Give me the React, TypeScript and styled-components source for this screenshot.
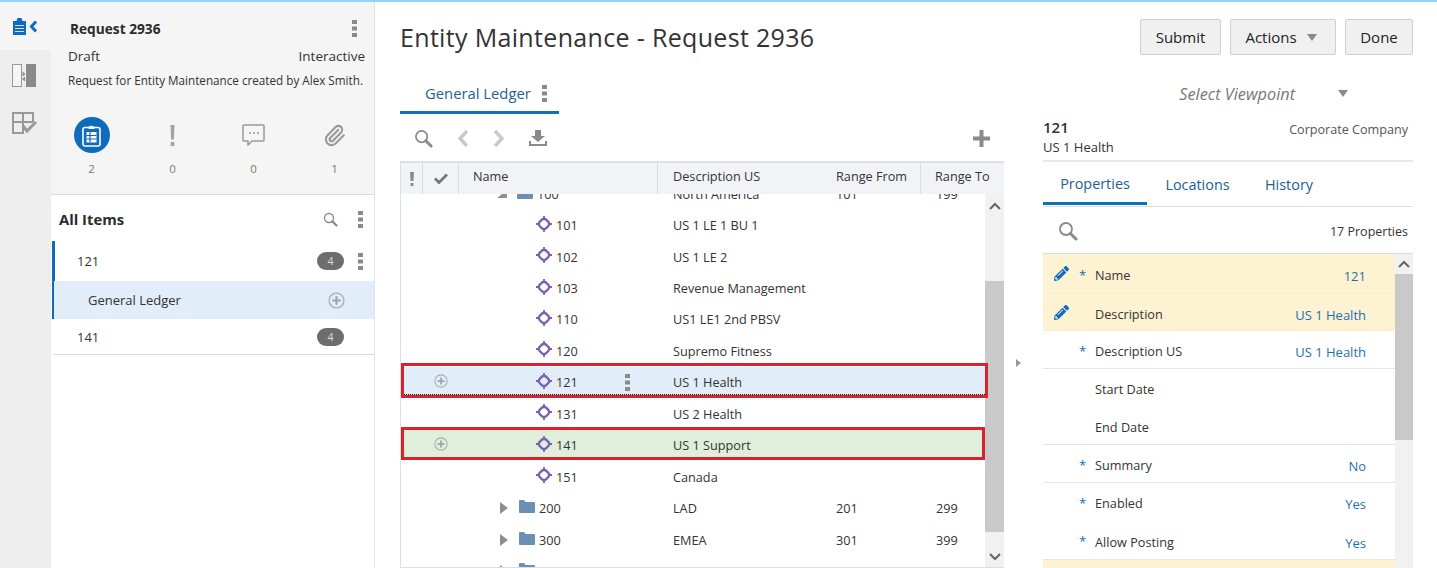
import React from "react";
import styled, { createGlobalStyle } from "styled-components";
import { FaPencilAlt } from "react-icons/fa";
import { Paperclip } from "lucide-react";

const Global = createGlobalStyle`
  html, body { margin: 0; height: 568px; overflow: hidden; background: #fff; }
  body { font-family: "Open Sans", "Noto Sans", sans-serif; font-size: 13px; color: #333; }
  * { box-sizing: border-box; }
`;

const Page = styled.div`display:flex;flex-direction:column;height:568px;width:1437px;overflow:hidden;`;
const TopBar = styled.div`height:2px;background:#8fd4fb;flex:none;`;
const Body = styled.div`display:flex;flex:1;min-height:0;`;

const Rail = styled.nav`width:51px;flex:none;background:#eeeeee;display:flex;flex-direction:column;align-items:center;`;
const RailTop = styled.div`width:100%;height:48px;background:#f5f5f5;display:flex;align-items:center;justify-content:center;gap:3px;margin-bottom:2px;`;
const RailItem = styled.div`height:47px;display:flex;align-items:center;justify-content:center;margin-left:-3px;`;

const Side = styled.aside`width:324px;flex:none;border-right:1px solid #e3e3e3;display:flex;flex-direction:column;`;
const SideHead = styled.header`height:193px;background:#f5f5f5;border-bottom:1px solid #dcdcdc;padding:0 9px 0 17px;display:flex;flex-direction:column;`;
const RequestRow = styled.div`display:flex;justify-content:space-between;align-items:center;height:20px;margin-top:16px;padding:0 8px 0 2px;`;
const RequestTitle = styled.div`font-size:13.7px;font-weight:700;color:#2b2b2b;`;
const StatusRow = styled.div`display:flex;justify-content:space-between;margin-top:8px;font-size:13.5px;line-height:20px;`;
const ReqDesc = styled.div`font-size:11.7px;line-height:16px;margin-top:6px;white-space:nowrap;`;
const Stats = styled.div`display:grid;grid-template-columns:repeat(4,81px);margin-top:29px;margin-left:-17px;padding-left:0;`;
const Stat = styled.div`display:flex;flex-direction:column;align-items:center;height:60px;`;
const StatIcon = styled.div`height:36px;display:flex;align-items:center;justify-content:center;`;
const StatNum = styled.div`font-size:11.5px;color:#777;margin-top:9px;line-height:14px;`;
const Circle = styled.div`width:36px;height:36px;border-radius:50%;background:#0f6cbd;display:flex;align-items:center;justify-content:center;`;

const ItemsHead = styled.div`display:flex;align-items:center;height:46px;padding:2px 11px 0 8px;margin-left:0;`;
const ItemsTitle = styled.div`font-size:14.8px;font-weight:700;color:#2b2b2b;flex:1;`;
const ItemRow = styled.div<{ $h: number; $bar?: boolean; $last?: boolean }>`
  height:${p => p.$h}px;display:flex;align-items:center;margin-left:1px;padding-left:22px;padding-right:11px;font-size:13px;
  border-left:3px solid ${p => (p.$bar ? "#0f6cbd" : "transparent")};
  ${p => p.$last && "border-bottom:1px solid #dcdcdc;"}
`;
const ItemName = styled.div`flex:1;`;
const Badge = styled.div`width:27px;height:18px;border-radius:9px;background:#6d6d6d;color:#ddd;font-size:10.5px;display:flex;align-items:center;justify-content:center;`;
const BadgeGutter = styled.div`width:19px;display:flex;justify-content:flex-end;`;
const LedgerRow = styled.div`height:38px;display:flex;align-items:center;margin-left:1px;padding:0 29px 0 34px;background:#e1edf8;border-left:2px solid #0f6cbd;font-size:13px;`;

const Main = styled.main`flex:1;min-width:0;padding:0 24px 0 25px;display:flex;flex-direction:column;`;
const TitleRow = styled.div`display:flex;justify-content:space-between;height:61px;padding-top:17px;flex:none;`;
const Title = styled.h1`margin:-1px 0 0;font-size:25px;font-weight:400;line-height:38px;color:#333;letter-spacing:.33px;`;
const Buttons = styled.div`display:flex;gap:9px;`;
const Btn = styled.button<{ $w: number; $shift?: number }>`height:36px;width:${p => p.$w}px;padding:0 ${p => p.$shift ?? 0}px 0 0;border:1px solid #cfcfcf;border-radius:2px;background:#f0f0f0;font:15px "Open Sans",sans-serif;color:#222;display:flex;align-items:center;justify-content:center;gap:10px;`;
const Caret = styled.span`width:0;height:0;border-left:5.5px solid transparent;border-right:5.5px solid transparent;border-top:7px solid #8a8a8a;display:inline-block;`;

const Columns = styled.div`display:flex;flex:1;min-height:0;`;
const TreePane = styled.section`width:604px;flex:none;display:flex;flex-direction:column;`;
const TabStrip = styled.div`height:52px;flex:none;`;
const ActiveTab = styled.div`width:159px;height:33px;margin-top:18px;border-bottom:3px solid #0f72b5;display:flex;align-items:center;gap:11px;padding:0 0 6px 25px;color:#1f5f8f;font-size:14.8px;`;
const Toolbar = styled.div`height:46px;flex:none;display:flex;align-items:center;padding:0 14px 0 14px;gap:24px;`;
const Spacer = styled.div`flex:1;`;
const Table = styled.div`flex:1;min-height:0;border:1px solid #dbe0e4;border-top-width:2px;border-right:0;display:flex;flex-direction:column;position:relative;`;
const cols = "22px 36px 199px 163px 100px 1fr";
const HeadRow = styled.div`display:grid;grid-template-columns:${cols};height:31px;background:#f1f3f6;flex:none;position:relative;z-index:1;`;
const HeadCell = styled.div<{ $line?: boolean; $center?: boolean; $pad?: number }>`
  display:flex;align-items:center;padding:0 0 6px ${p => p.$pad ?? 14}px;font-size:12.7px;white-space:nowrap;
  ${p => p.$center && "justify-content:center;padding-left:0;padding-bottom:0;"}
  ${p => p.$line && "border-right:1px solid #d9dde1;"}
`;
const TableBody = styled.div`flex:1;min-height:0;display:flex;overflow:hidden;`;
const Rows = styled.div`flex:1;margin-top:-16px;min-width:0;`;
const Row = styled.div<{ $bg?: string }>`
  display:grid;grid-template-columns:${cols};height:31.45px;position:relative;align-items:center;font-size:12.7px;
  ${p => p.$bg && `background:linear-gradient(${p.$bg},${p.$bg}) center/100% 30px no-repeat;`}
`;
const PlusCell = styled.div`grid-column:2;display:flex;justify-content:center;margin-top:-3px;`;
const NameCell = styled.div<{ $indent: number }>`grid-column:3;display:flex;align-items:center;padding-left:${p => p.$indent}px;gap:4px;white-space:nowrap;`;
const Cell = styled.div`padding-left:15px;white-space:nowrap;`;
const Mark = styled.div<{ $top: number; $height: number; $right: number; $dotted?: boolean }>`
  position:absolute;left:0;right:${p => p.$right}px;top:${p => p.$top}px;height:${p => p.$height}px;border:3px solid #d8232f;pointer-events:none;z-index:2;
  ${p => p.$dotted && `&::after{content:"";position:absolute;left:0;right:0;bottom:0;border-bottom:1px dotted #111;}`}
`;
const Scroll = styled.div<{ $w?: number }>`width:${p => p.$w ?? 19}px;flex:none;background:#f1f1f1;display:flex;flex-direction:column;align-items:center;`;
const ScrollEnd = styled.div<{ $h: number }>`height:${p => p.$h}px;flex:none;display:flex;align-items:center;justify-content:center;width:100%;`;
const Thumb = styled.div<{ $h: number }>`height:${p => p.$h}px;flex:none;width:100%;background:#c9c9c9;`;

const Splitter = styled.div`width:39px;flex:none;display:flex;justify-content:center;padding:296px 11px 0 0;`;
const SplitArrow = styled.span`width:0;height:0;border-top:4px solid transparent;border-bottom:4px solid transparent;border-left:5px solid #999;`;

const Details = styled.section`flex:1;min-width:0;display:flex;flex-direction:column;`;
const Viewpoint = styled.div`height:52px;display:flex;align-items:center;justify-content:flex-end;gap:43px;padding:9px 65px 0 0;font-style:italic;font-size:16.3px;color:#777;flex:none;`;
const NodeHead = styled.div`height:47px;flex:none;border-bottom:2px solid #eaeaea;display:flex;justify-content:space-between;padding:0 5px 0 0;`;
const NodeName = styled.div`font-size:15px;font-weight:600;line-height:20px;margin-top:2px;color:#333;`;
const NodeSub = styled.div`font-size:13px;line-height:16px;margin-top:2px;`;
const NodeType = styled.div`font-size:12.6px;margin-top:6px;color:#555;`;
const DTabs = styled.div`height:45px;flex:none;display:flex;border-bottom:1px solid #dcdfe2;`;
const DTab = styled.div<{ $active?: boolean; $w: number }>`
  width:${p => p.$w}px;height:43px;display:flex;align-items:center;justify-content:center;font-size:14.4px;color:#22618f;padding-top:2px;
  ${p => p.$active && "border-bottom:3px solid #0f72b5;"}
`;
const PropTools = styled.div`height:46px;flex:none;display:flex;align-items:center;justify-content:space-between;padding:2px 5px 0 15px;font-size:12.5px;`;
const PropArea = styled.div`flex:1;min-height:0;display:flex;border-top:1px solid #dcdcdc;overflow:hidden;`;
const PropList = styled.div`flex:1;min-width:0;`;
const PropRow = styled.div<{ $h: number; $yellow?: boolean; $line?: boolean }>`
  height:${p => p.$h}px;display:grid;grid-template-columns:36px 16px 1fr auto;align-items:center;padding:3px 29px 0 0;font-size:12.7px;
  background:${p => (p.$yellow ? "#fdf3d2" : "#fff")};
  border-bottom:1px solid ${p => (p.$yellow ? "#f8eecb" : p.$line ? "#e6e6e6" : "transparent")};
`;
const EditCell = styled.div`display:flex;justify-content:center;padding-left:1px;margin-top:-3px;`;
const Star = styled.span`color:#0f6cbd;font-size:13px;line-height:1;`;
const PropVal = styled.span`color:#1d6fb0;font-size:13px;margin-top:2px;`;
const Dummy = styled.span``;

const Kebab = ({ c = "#8a8a8a" }: { c?: string }) => (
  <svg width="5" height="17" viewBox="0 0 5 17"><rect x="0" y="0" width="5" height="4" fill={c} /><rect x="0" y="6.5" width="5" height="4" fill={c} /><rect x="0" y="13" width="5" height="4" fill={c} /></svg>
);
const Search = ({ s = 20, c = "#8a8a8a" }: { s?: number; c?: string }) => (
  <svg width={s} height={s} viewBox="0 0 20 20" fill="none"><circle cx="8" cy="8" r="6" stroke={c} strokeWidth="1.8" /><path d="M12.5 12.5 18 18" stroke={c} strokeWidth="3" strokeLinecap="round" /></svg>
);
const PlusCircle = ({ s = 15 }: { s?: number }) => (
  <svg width={s} height={s} viewBox="0 0 16 16" fill="none"><circle cx="8" cy="8" r="7" stroke="#a9aeb0" strokeWidth="1.2" /><path d="M8 4v8M4 8h8" stroke="#a0a5a7" strokeWidth="2" /></svg>
);
const Node = () => (
  <svg width="16" height="16" viewBox="0 0 16 16" fill="none" style={{ flex: "none", marginTop: -3, marginLeft: 1 }}>
    <path d="M8 2.8 Q10 3 11.2 4.8 Q13 6 13.2 8 Q13 10 11.2 11.2 Q10 13 8 13.2 Q6 13 4.8 11.2 Q3 10 2.8 8 Q3 6 4.8 4.8 Q6 3 8 2.8Z" stroke="#7a5fb5" strokeWidth="2.4" fill="none" />
    <path d="M8 0v3M8 13v3M0 8h3M13 8h3" stroke="#7a5fb5" strokeWidth="1.8" />
  </svg>
);
const Folder = () => (
  <svg width="16" height="13" viewBox="0 0 16 13" style={{ flex: "none", marginTop: -3 }}><path d="M0 1a1 1 0 0 1 1-1h4l1.5 2H15a1 1 0 0 1 1 1v9a1 1 0 0 1-1 1H1a1 1 0 0 1-1-1Z" fill="#6b8fb5" /></svg>
);
const Tri = () => (
  <svg width="8" height="12" viewBox="0 0 8 12" style={{ flex: "none", marginRight: 7 }}><path d="M0 0 8 6 0 12Z" fill="#8f8f8f" /></svg>
);
const TriDown = () => (
  <svg width="10" height="8" viewBox="0 0 10 8" style={{ flex: "none", marginRight: 6 }}><path d="M10 0V8H0Z" fill="#8f8f8f" /></svg>
);
const Chev = ({ d, c = "#666" }: { d: "up" | "down"; c?: string }) => (
  <svg width="12" height="8" viewBox="0 0 12 8" fill="none"><path d={d === "up" ? "M1 7 6 2l5 5" : "M1 1l5 5 5-5"} stroke={c} strokeWidth="2" /></svg>
);
const ClipboardBlue = () => (
  <svg width="13" height="17" viewBox="0 0 13 17"><path d="M0 3h3.5l1-3h4l1 3H13v14H0Z" fill="#0f6cbd" /><path d="M2 7.5h9M2 10.5h9M2 13.5h9" stroke="#cfe3f5" strokeWidth="1" /></svg>
);
const ClipboardWhite = () => (
  <svg width="19" height="23" viewBox="0 0 19 23" fill="none">
    <rect x="1" y="3.5" width="17" height="18.5" rx="2" stroke="#fff" strokeWidth="1.6" />
    <path d="M6.5 5V2.5h2a1 1 0 0 1 2 0h2V5Z" fill="#fff" />
    <rect x="4.5" y="8" width="10" height="10.5" fill="#fff" />
    <path d="M4.5 11.5h10M4.5 15h10M8 8v10.5" stroke="#0f6cbd" strokeWidth="1.2" />
  </svg>
);

const leaves: [string, string][] = [["101", "US 1 LE 1 BU 1"], ["102", "US 1 LE 2"], ["103", "Revenue Management"], ["110", "US1 LE1 2nd PBSV"], ["120", "Supremo Fitness"]];

export default function App() {
  return (
    <Page>
      <Global />
      <TopBar />
      <Body>
        <Rail>
          <RailTop>
            <ClipboardBlue />
            <svg width="9" height="13" viewBox="0 0 9 13" fill="none"><path d="M7 1.5 2.5 6.5 7 11.5" stroke="#0f6cbd" strokeWidth="3" /></svg>
          </RailTop>
          <RailItem>
            <svg width="24" height="23" viewBox="0 0 24 23" fill="none"><rect x=".5" y=".5" width="9" height="22" stroke="#999" fill="#f5f5f5" /><rect x="14" y="0" width="10" height="23" fill="#8a8a8a" /><path d="M10.5 7.5l3 2.5-3 2.5ZM13 12.5l-3 2.5 3 2.5Z" fill="#8a8a8a" /></svg>
          </RailItem>
          <RailItem>
            <svg width="25" height="22" viewBox="0 0 25 22" fill="none"><path d="M12 21H1V1h20v9M1 10h20M11 1v20" stroke="#999" strokeWidth="2" /><path d="M11 14l4 5 9-9" stroke="#999" strokeWidth="3" fill="none" /></svg>
          </RailItem>
        </Rail>
        <Side>
          <SideHead>
            <RequestRow>
              <RequestTitle>Request 2936</RequestTitle>
              <Kebab />
            </RequestRow>
            <StatusRow><span>Draft</span><span>Interactive</span></StatusRow>
            <ReqDesc>Request for Entity Maintenance created by Alex Smith.</ReqDesc>
            <Stats>
              <Stat><StatIcon><Circle><ClipboardWhite /></Circle></StatIcon><StatNum>2</StatNum></Stat>
              <Stat><StatIcon><svg width="5" height="21" viewBox="0 0 5 21"><path d="M.5 0h4l-.6 14.5H1.1Z" fill="#a3a3a3" /><rect x=".7" y="17" width="3.6" height="4" fill="#a3a3a3" /></svg></StatIcon><StatNum>0</StatNum></Stat>
              <Stat><StatIcon><svg width="23" height="22" viewBox="0 0 23 22" fill="none"><path d="M2 1h19a1 1 0 0 1 1 1v14a1 1 0 0 1-1 1H10l-4 4v-4H2a1 1 0 0 1-1-1V2a1 1 0 0 1 1-1Z" stroke="#999" strokeWidth="1.5" /><path d="M7 9h2M11 9h2M15 9h2" stroke="#999" strokeWidth="1.4" /></svg></StatIcon><StatNum>0</StatNum></Stat>
              <Stat><StatIcon><Paperclip size={23} color="#999" strokeWidth={2.2} /></StatIcon><StatNum>1</StatNum></Stat>
            </Stats>
          </SideHead>
          <ItemsHead>
            <ItemsTitle>All Items</ItemsTitle>
            <Search s={15} />
            <Dummy style={{ width: 20 }} />
            <Kebab />
          </ItemsHead>
          <ItemRow $h={40} $bar><ItemName>121</ItemName><Badge>4</Badge><BadgeGutter><Kebab /></BadgeGutter></ItemRow>
          <LedgerRow><ItemName>General Ledger</ItemName><PlusCircle s={17} /></LedgerRow>
          <ItemRow $h={36} $last><ItemName>141</ItemName><Badge>4</Badge><BadgeGutter /></ItemRow>
        </Side>
        <Main>
          <TitleRow>
            <Title>Entity Maintenance - Request 2936</Title>
            <Buttons>
              <Btn $w={81}>Submit</Btn>
              <Btn $w={106} $shift={4}>Actions<Caret /></Btn>
              <Btn $w={68}>Done</Btn>
            </Buttons>
          </TitleRow>
          <Columns>
            <TreePane>
              <TabStrip><ActiveTab>General Ledger<Kebab /></ActiveTab></TabStrip>
              <Toolbar>
                <Search s={19} />
                <svg width="12" height="19" viewBox="0 0 12 19" fill="none"><path d="M10 2 3 9.5l7 7.5" stroke="#c9c9c9" strokeWidth="3.4" /></svg>
                <svg width="12" height="19" viewBox="0 0 12 19" fill="none"><path d="M2 2l7 7.5L2 17" stroke="#c9c9c9" strokeWidth="3.4" /></svg>
                <svg width="18" height="16" viewBox="0 0 18 16"><path d="M6 0h6v6h4l-7 6-7-6h4Z" fill="#8a8a8a" /><path d="M0 11v5h18v-5h-2v3H2v-3Z" fill="#8a8a8a" /></svg>
                <Spacer />
                <svg width="17" height="17" viewBox="0 0 17 17"><path d="M6.5 0h4v6.5H17v4h-6.5V17h-4v-6.5H0v-4h6.5Z" fill="#8a8a8a" /></svg>
              </Toolbar>
              <Table>
                <HeadRow>
                  <HeadCell $line $center><svg width="4" height="14" viewBox="0 0 4 14"><path d="M0 0h4l-.6 9H.6Z M.6 11h2.8v3H.6Z" fill="#8a8a8a" /></svg></HeadCell>
                  <HeadCell $line $center><svg width="14" height="11" viewBox="0 0 14 11" fill="none"><path d="M1 5.5 5 9.5 13 1.5" stroke="#777" strokeWidth="2.8" /></svg></HeadCell>
                  <HeadCell $line>Name</HeadCell>
                  <HeadCell $pad={15}>Description US</HeadCell>
                  <HeadCell $line $pad={15}>Range From</HeadCell>
                  <HeadCell>Range To</HeadCell>
                </HeadRow>
                <TableBody>
                  <Rows>
                    <Row><NameCell $indent={38}><TriDown /><Folder /><Dummy>100</Dummy></NameCell><Cell>North America</Cell><Cell>101</Cell><Cell>199</Cell></Row>
                    {leaves.map(([n, d]) => (
                      <Row key={n}><NameCell $indent={76}><Node /><Dummy>{n}</Dummy></NameCell><Cell>{d}</Cell></Row>
                    ))}
                    <Row $bg="#e1edf8">
                      <PlusCell><PlusCircle s={14} /></PlusCell>
                      <NameCell $indent={76}><Node /><Dummy>121</Dummy><Dummy style={{ width: 39 }} /><Kebab /></NameCell>
                      <Cell>US 1 Health</Cell>
                    </Row>
                    <Row><NameCell $indent={76}><Node /><Dummy>131</Dummy></NameCell><Cell>US 2 Health</Cell></Row>
                    <Row $bg="#e0efdb">
                      <PlusCell><PlusCircle s={14} /></PlusCell>
                      <NameCell $indent={76}><Node /><Dummy>141</Dummy></NameCell>
                      <Cell>US 1 Support</Cell>
                    </Row>
                    <Row><NameCell $indent={76}><Node /><Dummy>151</Dummy></NameCell><Cell>Canada</Cell></Row>
                    <Row><NameCell $indent={41}><Tri /><Folder /><Dummy>200</Dummy></NameCell><Cell>LAD</Cell><Cell>201</Cell><Cell>299</Cell></Row>
                    <Row><NameCell $indent={41}><Tri /><Folder /><Dummy>300</Dummy></NameCell><Cell>EMEA</Cell><Cell>301</Cell><Cell>399</Cell></Row>
                    <Row><NameCell $indent={41}><Tri /><Folder /><Dummy>400</Dummy></NameCell><Cell>APAC</Cell></Row>
                  </Rows>
                  <Scroll>
                    <ScrollEnd $h={23}><Chev d="up" /></ScrollEnd>
                    <ScrollEnd $h={64} />
                    <Thumb $h={251} />
                    <ScrollEnd $h={14} />
                    <ScrollEnd $h={22}><Chev d="down" /></ScrollEnd>
                  </Scroll>
                </TableBody>
                <Mark $top={200} $height={35} $right={16} $dotted />
                <Mark $top={264} $height={33} $right={19} />
              </Table>
            </TreePane>
            <Splitter><SplitArrow /></Splitter>
            <Details>
              <Viewpoint><span>Select Viewpoint</span><Caret /></Viewpoint>
              <NodeHead>
                <div><NodeName>121</NodeName><NodeSub>US 1 Health</NodeSub></div>
                <NodeType>Corporate Company</NodeType>
              </NodeHead>
              <DTabs>
                <DTab $active $w={104}>Properties</DTab>
                <DTab $w={101}>Locations</DTab>
                <DTab $w={82}>History</DTab>
              </DTabs>
              <PropTools><Search s={20} /><span>17 Properties</span></PropTools>
              <PropArea>
                <PropList>
                  <PropRow $h={40} $yellow><EditCell><FaPencilAlt size={15} color="#0f6cbd" /></EditCell><Star>*</Star><span>Name</span><PropVal>121</PropVal></PropRow>
                  <PropRow $h={37} $yellow><EditCell><FaPencilAlt size={15} color="#0f6cbd" /></EditCell><span /><span>Description</span><PropVal>US 1 Health</PropVal></PropRow>
                  <PropRow $h={38} $line><span /><Star>*</Star><span>Description US</span><PropVal>US 1 Health</PropVal></PropRow>
                  <PropRow $h={38}><span /><span /><span>Start Date</span><span /></PropRow>
                  <PropRow $h={38} $line><span /><span /><span>End Date</span><span /></PropRow>
                  <PropRow $h={38} $line><span /><Star>*</Star><span>Summary</span><PropVal>No</PropVal></PropRow>
                  <PropRow $h={38}><span /><Star>*</Star><span>Enabled</span><PropVal>Yes</PropVal></PropRow>
                  <PropRow $h={39} $line><span /><Star>*</Star><span>Allow Posting</span><PropVal>Yes</PropVal></PropRow>
                  <PropRow $h={38} $yellow />
                </PropList>
                <Scroll $w={18}>
                  <ScrollEnd $h={20}><Chev d="up" /></ScrollEnd>
                  <Thumb $h={166} />
                </Scroll>
              </PropArea>
            </Details>
          </Columns>
        </Main>
      </Body>
    </Page>
  );
}
